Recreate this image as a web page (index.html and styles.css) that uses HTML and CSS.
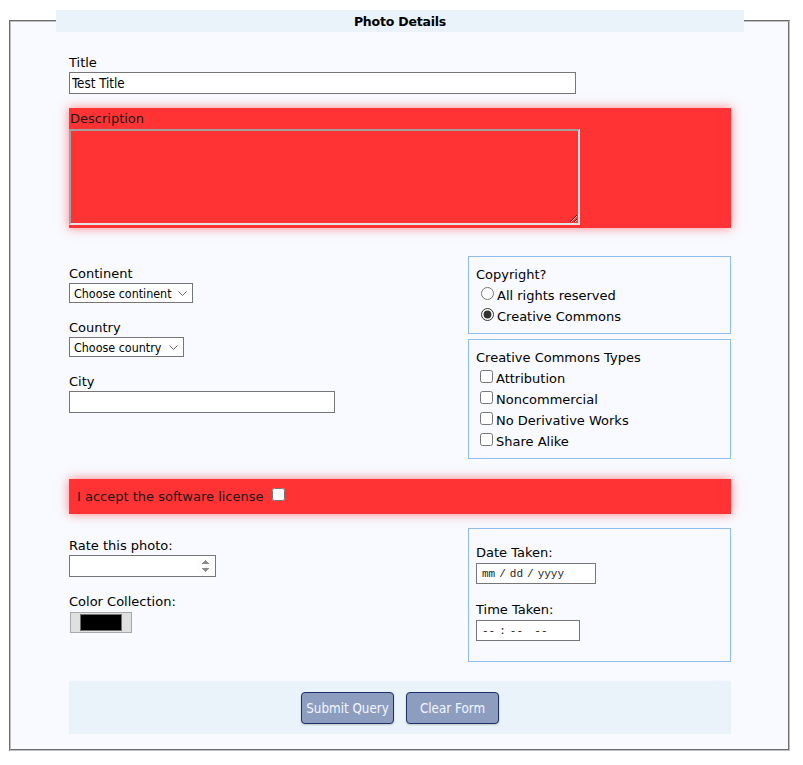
FILE: index.html
```html
<!DOCTYPE html>
<html lang="en">
<head>
<meta charset="utf-8">
<title>Photo Details</title>
<link rel="stylesheet" href="styles.css">
</head>
<body>
<form class="photo-form">
  <fieldset class="photo">
    <legend class="photo-legend">Photo Details</legend>

    <div class="group title-group">
      <label class="field-label" for="title">Title</label>
      <input class="text-input title-input" id="title" type="text" value="Test Title">
    </div>

    <div class="alert desc">
      <label class="desc-label" for="description">Description</label>
      <textarea class="desc-area" id="description"></textarea>
    </div>

    <div class="cols cols-top">
      <div class="col-left">
        <div class="group">
          <label class="field-label" for="continent">Continent</label>
          <select class="select" id="continent"><option>Choose continent</option></select>
        </div>
        <div class="group">
          <label class="field-label" for="country">Country</label>
          <select class="select" id="country"><option>Choose country</option></select>
        </div>
        <div class="group">
          <label class="field-label" for="city">City</label>
          <input class="text-input city-input" id="city" type="text">
        </div>
      </div>
      <div class="col-right">
        <div class="box">
          <div class="box-title">Copyright?</div>
          <div class="opt"><input type="radio" name="copy" id="r1"><label for="r1">All rights reserved</label></div>
          <div class="opt"><input type="radio" name="copy" id="r2" checked><label for="r2">Creative Commons</label></div>
        </div>
        <div class="box box-cc">
          <div class="box-title">Creative Commons Types</div>
          <div class="opt"><input type="checkbox" id="c1"><label for="c1">Attribution</label></div>
          <div class="opt"><input type="checkbox" id="c2"><label for="c2">Noncommercial</label></div>
          <div class="opt"><input type="checkbox" id="c3"><label for="c3">No Derivative Works</label></div>
          <div class="opt"><input type="checkbox" id="c4"><label for="c4">Share Alike</label></div>
        </div>
      </div>
    </div>

    <div class="alert license">
      <label for="license">I accept the software license</label> <input class="license-check" type="checkbox" id="license">
    </div>

    <div class="cols cols-bottom">
      <div class="col-left">
        <div class="group">
          <label class="field-label" for="rate">Rate this photo:</label>
          <input class="text-input rate-input" id="rate" type="number">
        </div>
        <div class="group">
          <label class="field-label color-label" for="color">Color Collection:</label>
          <input class="color-input" id="color" type="color" value="#000000">
        </div>
      </div>
      <div class="box datebox">
        <div class="group">
          <label class="field-label" for="date">Date Taken:</label>
          <input class="dt-input date-input" id="date" type="date">
        </div>
        <div class="group">
          <label class="field-label" for="time">Time Taken:</label>
          <input class="dt-input time-input" id="time" type="time">
        </div>
      </div>
    </div>

    <div class="actions">
      <button class="btn" type="submit">Submit Query</button>
      <button class="btn" type="reset">Clear Form</button>
    </div>
  </fieldset>
</form>
</body>
</html>
```
FILE: styles.css
```css
html {
  background: #ffffff;
}

body {
  margin: 0;
  font-family: "DejaVu Sans", Verdana, sans-serif;
  font-size: 13px;
  color: #000;
}

.photo-form {
  margin: 0;
}

.photo {
  box-sizing: border-box;
  width: 781px;
  margin: 10px 0 0 9px;
  padding: 0 57px 15px 58px;
  border: 2px groove #c0c0c0;
  background: #f8faff;
  min-inline-size: 0;
}

.photo-legend {
  box-sizing: border-box;
  width: 688px;
  height: 22px;
  margin: 0 0 0 -13px;
  padding: 0;
  background: #eaf2fa;
  text-align: center;
  font-weight: bold;
  font-size: 12.5px;
  letter-spacing: -0.2px;
  line-height: 23px;
}

.field-label {
  display: block;
  line-height: 15px;
  margin-bottom: 2px;
}

.group + .group {
  margin-top: 17px;
}

.title-group {
  margin-top: 23px;
}

.text-input,
.select,
.btn,
.desc-area {
  font-family: "DejaVu Sans Condensed", "DejaVu Sans", sans-serif;
  font-stretch: condensed;
  font-size: 13.3px;
}

.text-input {
  display: block;
  box-sizing: border-box;
  height: 22px;
  margin: 0;
  padding: 1px 2px;
  border: 1px solid #767676;
  border-radius: 0;
  background: #fff;
  color: #000;
}

.title-input {
  width: 507px;
}

.city-input {
  width: 266px;
}

.rate-input {
  width: 147px;
}

.rate-input::-webkit-inner-spin-button {
  opacity: 1;
}

.alert {
  background: #ff3333;
  box-shadow: 0 0 10px rgba(255, 51, 51, 0.6);
  color: #1a1a1a;
}

.desc {
  margin-top: 14px;
  height: 120px;
  box-sizing: border-box;
}

.desc-label {
  display: block;
  line-height: 21px;
  padding-left: 1px;
}

.desc-area {
  display: block;
  box-sizing: border-box;
  width: 511px;
  height: 96px;
  margin: 0;
  padding: 2px;
  border: 2px solid;
  border-color: #a0a0a0 #e4e4e4 #e4e4e4 #a0a0a0;
  background: transparent;
  resize: both;
}

.cols {
  display: grid;
  grid-template-columns: 1fr 263px;
  align-items: start;
}

.cols-top {
  margin-top: 28px;
}

.col-left {
  padding-top: 10px;
}

.select {
  display: block;
  box-sizing: border-box;
  height: 20px;
  margin: 0;
  padding: 0 0 0 4px;
  border: 1px solid #767676;
  border-radius: 0;
  background-color: #fff;
  background-image: url("data:image/svg+xml,%3Csvg xmlns='http://www.w3.org/2000/svg' width='9' height='5' viewBox='0 0 9 5'%3E%3Cpath d='M0.5 0.5L4.5 4.5L8.5 0.5' fill='none' stroke='%23666' stroke-width='1'/%3E%3C/svg%3E");
  background-repeat: no-repeat;
  background-position: right 5px center;
  color: #000;
  font-size: 12.4px;
  appearance: none;
  -webkit-appearance: none;
}

#continent {
  width: 124px;
}

#country {
  width: 115px;
}

.box {
  box-sizing: border-box;
  border: 1px solid #90bdf0;
  padding: 7px 7px 6px;
  line-height: 21px;
}

.box-cc {
  margin-top: 5px;
}

.opt input {
  width: 13px;
  height: 13px;
  vertical-align: baseline;
  accent-color: #333;
}

.opt input[type="radio"] {
  margin: 0 3px 0 5px;
}

.opt input[type="checkbox"] {
  margin: 0 3px 0 4px;
}

.license {
  margin-top: 20px;
  height: 35px;
  box-sizing: border-box;
  padding: 1px 8px 0;
  line-height: 34px;
}

.license-check {
  width: 13px;
  height: 13px;
  margin: 0 0 0 4px;
  vertical-align: baseline;
}

.cols-bottom {
  margin-top: 14px;
}

.color-label {
  margin-bottom: 3px;
}

.color-input {
  display: block;
  box-sizing: border-box;
  width: 62px;
  height: 21px;
  margin: 0 0 0 1px;
  padding: 1px 9px;
  border: 1px solid #a9a9a9;
  background: #e0e0e0;
  cursor: pointer;
}

.color-input::-webkit-color-swatch-wrapper {
  padding: 0;
}

.color-input::-webkit-color-swatch {
  border: 1px solid #6f6f6f;
  border-radius: 0;
}

.datebox {
  padding: 16px 7px 20px;
  line-height: normal;
}

.datebox .field-label {
  margin-bottom: 3px;
}

.datebox .group + .group {
  margin-top: 18px;
}

.dt-input {
  display: block;
  box-sizing: border-box;
  height: 21px;
  margin: 0;
  padding: 1px 4px;
  border: 1px solid #767676;
  border-radius: 0;
  background: #fff;
  color: #222;
  font-family: "Liberation Mono", "Courier New", monospace;
  font-size: 11px;
}

.dt-input::-webkit-calendar-picker-indicator {
  display: none;
}

.dt-input::-webkit-datetime-edit-text {
  padding: 0 3px;
  color: #222;
}

.dt-input::-webkit-datetime-edit-month-field,
.dt-input::-webkit-datetime-edit-day-field,
.dt-input::-webkit-datetime-edit-year-field,
.dt-input::-webkit-datetime-edit-hour-field,
.dt-input::-webkit-datetime-edit-minute-field,
.dt-input::-webkit-datetime-edit-ampm-field,
.dt-input::-webkit-datetime-edit-month-field:focus,
.dt-input::-webkit-datetime-edit-hour-field:focus {
  color: #222;
  background-color: transparent;
  outline: none;
}

.actions {
  margin-top: 19px;
  padding: 11px 0 10px;
  background: #eaf2fa;
  display: flex;
  justify-content: center;
  gap: 12px;
}

.btn {
  box-sizing: border-box;
  width: 93px;
  height: 32px;
  margin: 0;
  padding: 0;
  border: 1px solid #1e2e66;
  border-radius: 4px;
  background: #8c9dc0;
  color: #f4f6fb;
  box-shadow: 0 1px 2px rgba(0, 0, 0, 0.2);
  cursor: pointer;
}

.date-input {
  width: 120px;
}

.time-input {
  width: 104px;
}
```
